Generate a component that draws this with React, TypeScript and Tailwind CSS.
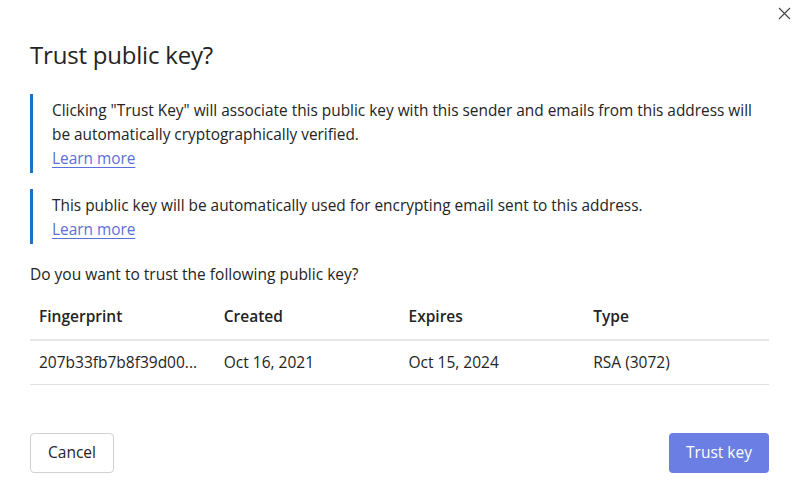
import React from "react";

export default function App() {
  const font = { fontFamily: '"Open Sans", "Noto Sans", sans-serif' };
  return (
    <div className="relative w-[800px] h-[503px] bg-white text-[#242424] overflow-hidden" style={font}>
      <button className="absolute right-[8px] top-[5px] w-[16px] h-[16px] flex items-center justify-center text-[#424242]">
        <svg width="13" height="13" viewBox="0 0 13 13" fill="none" stroke="currentColor" strokeWidth="1.1">
          <path d="M1 1L12 12M12 1L1 12" />
        </svg>
      </button>
      <div className="pl-[30px] pr-[31px] pt-[39px] flex flex-col">
        <h1 className="text-[24px] leading-[32px] font-normal tracking-[-0.2px]">Trust public key?</h1>

        <div className="mt-[23px] border-l-[3px] border-[#1b72c6] pl-[19px] pt-[5px] pb-[2px] text-[15.4px] leading-[24px]">
          <p>Clicking "Trust Key" will associate this public key with this sender and emails from this address will be automatically cryptographically verified.</p>
          <a className="text-[#5b6fd8] underline underline-offset-[3px] decoration-[1px]">Learn more</a>
        </div>

        <div className="mt-[16px] border-l-[3px] border-[#1b72c6] pl-[19px] pt-[5px] pb-[2px] text-[15.4px] leading-[24px]">
          <p>This public key will be automatically used for encrypting email sent to this address.</p>
          <a className="text-[#5b6fd8] underline underline-offset-[3px] decoration-[1px]">Learn more</a>
        </div>

        <p className="mt-[18px] text-[15.5px] leading-[24px]">Do you want to trust the following public key?</p>

        <div className="mt-[9px] text-[15.5px]">
          <div className="grid grid-cols-4 h-[46px] items-center border-b-2 border-[#e6e6e6] font-semibold">
            <div className="pl-[9px]">Fingerprint</div>
            <div className="pl-[9px]">Created</div>
            <div className="pl-[9px]">Expires</div>
            <div className="pl-[9px]">Type</div>
          </div>
          <div className="grid grid-cols-4 h-[44px] items-center border-b border-[#e0e0e0]">
            <div className="pl-[9px] pt-[1px]">207b33fb7b8f39d00...</div>
            <div className="pl-[9px] pt-[1px]">Oct 16, 2021</div>
            <div className="pl-[9px] pt-[1px]">Oct 15, 2024</div>
            <div className="pl-[9px] pt-[1px]">RSA (3072)</div>
          </div>
        </div>

        <div className="mt-[48px] flex justify-between">
          <button className="w-[84px] h-[40px] rounded-[4px] border border-[#d1d1d1] bg-white text-[15.5px] text-[#242424]">Cancel</button>
          <button className="w-[100px] h-[40px] rounded-[4px] bg-[#6a7ee3] text-[15.5px] text-white">Trust key</button>
        </div>
      </div>
    </div>
  );
}
